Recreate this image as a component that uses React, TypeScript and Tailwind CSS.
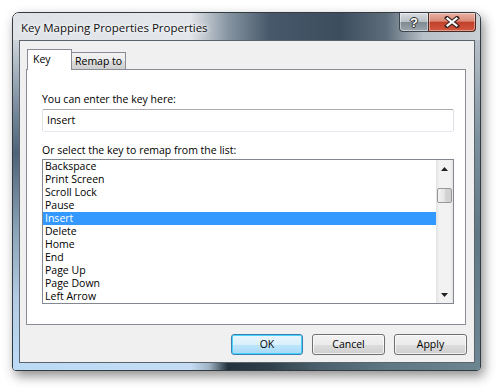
const keys = [
  "Backspace",
  "Print Screen",
  "Scroll Lock",
  "Pause",
  "Insert",
  "Delete",
  "Home",
  "End",
  "Page Up",
  "Page Down",
  "Left Arrow",
]

function TitleButtons() {
  return (
    <div className="ml-auto mr-[4px] flex h-[19px]">
      <div className="flex w-[29px] items-center justify-center rounded-bl-[4px] border border-t-0 border-r-0 border-[#3e464d] bg-[linear-gradient(180deg,#d9dde1_0%,#b9c0c6_48%,#7f8a93_52%,#9aa4ac_100%)] shadow-[inset_0_0_0_1px_rgba(255,255,255,0.45)]">
        <span className="font-['Liberation_Sans',sans-serif] text-[13px] font-bold leading-none text-white [text-shadow:0_0_1px_#222,1px_0_0_#333,-1px_0_0_#333,0_1px_0_#333,0_-1px_0_#333]">
          ?
        </span>
      </div>
      <div className="flex w-[48px] items-center justify-center rounded-br-[4px] border border-t-0 border-[#4b2a24] bg-[linear-gradient(180deg,#eab2a4_0%,#d98a77_45%,#c2402a_52%,#d2583f_100%)] shadow-[inset_0_0_0_1px_rgba(255,255,255,0.4)]">
        <svg width="16" height="12" viewBox="0 0 16 12">
          <path d="M3 2 L13 10 M13 2 L3 10" stroke="#3a2420" strokeWidth="4.2" strokeLinecap="square" />
          <path d="M3.5 2.5 L12.5 9.5 M12.5 2.5 L3.5 9.5" stroke="#ffffff" strokeWidth="2.2" strokeLinecap="square" />
        </svg>
      </div>
    </div>
  )
}

function ScrollBar() {
  return (
    <div className="flex w-[17px] flex-col bg-[linear-gradient(90deg,#e3e3e3,#f2f2f2_20%,#f2f2f2_80%,#e6e6e6)]">
      <div className="flex h-[17px] items-center justify-center">
        <svg width="7" height="4" viewBox="0 0 7 4">
          <path d="M0 4 L3.5 0 L7 4 Z" fill="#222" />
        </svg>
      </div>
      <div className="mx-[1px] mt-[11px] h-[15px] rounded-[2px] border border-[#979797] bg-[linear-gradient(90deg,#f3f3f3,#e4e4e4_50%,#d4d4d4_52%,#cfcfcf)]" />
      <div className="flex-1" />
      <div className="flex h-[17px] items-center justify-center">
        <svg width="7" height="4" viewBox="0 0 7 4">
          <path d="M0 0 L7 0 L3.5 4 Z" fill="#222" />
        </svg>
      </div>
    </div>
  )
}

function DlgButton({ label, primary }: { label: string; primary?: boolean }) {
  return (
    <div
      className={
        primary
          ? "flex h-[21px] w-[72px] items-center justify-center rounded-[3px] border border-[#3c7fb1] bg-[linear-gradient(180deg,#eaf6fd_0%,#d9f0fc_50%,#bee6fd_51%,#a7d9f5_100%)] shadow-[inset_0_0_0_1px_#48d3fb]"
          : "flex h-[21px] w-[73px] items-center justify-center rounded-[3px] border border-[#707070] bg-[linear-gradient(180deg,#f2f2f2_0%,#ebebeb_50%,#dddddd_51%,#cfcfcf_100%)] shadow-[inset_0_0_0_1px_rgba(255,255,255,0.7)]"
      }
    >
      {label}
    </div>
  )
}

export default function App() {
  return (
    <div className="h-[391px] w-[502px] whitespace-nowrap bg-white pl-[12px] pt-[12px] font-['Open_Sans','Noto_Sans',sans-serif] text-[10.5px] text-black">
      <div className="flex h-[359px] w-[469px] flex-col overflow-hidden rounded-t-[7px] rounded-b-[4px] border border-[#333b42] shadow-[3px_5px_12px_rgba(0,0,0,0.45)]">
        {/* title bar, aero glass */}
        <div className="flex h-[27px] items-start bg-[linear-gradient(90deg,#dfe3e7_0%,#e3e6ea_38%,#8795a2_46%,#465869_55%,#3c4d5e_70%,#5d6d7b_80%,#b9c1c8_88%,#c9d0d6_100%)]">
          <span className="ml-[8px] mt-[7px] text-[11.5px] leading-[15px] text-[#101010] [text-shadow:0_0_6px_#fff,0_0_3px_#fff]">
            Key Mapping Properties Properties
          </span>
          <TitleButtons />
        </div>

        <div className="flex flex-1">
          <div className="w-[6px] bg-[linear-gradient(180deg,#cfd5db_0%,#7d8fa0_20%,#4f6377_35%,#8ea5ba_60%,#b3cce3_80%,#bcdaf5_100%)]" />

          {/* client area */}
          <div className="flex flex-1 flex-col border border-[#5b646c] bg-[#f0f0f0] pl-[6px] pr-[8px] pt-[8px]">
            {/* tabs */}
            <div className="relative z-10 flex h-[20px] items-end pl-[1px]">
              <div className="-mb-[1px] h-[21px] w-[45px] border border-b-0 border-[#898c95] bg-white pl-[5px] pt-[2px] leading-[15px]">
                Key
              </div>
              <div className="h-[17px] w-[54px] border border-b-0 border-l-0 border-[#898c95] bg-[linear-gradient(180deg,#f2f2f2_0%,#ebebeb_50%,#dddddd_51%,#cfcfcf_100%)] pl-[3px] pt-[1px] leading-[15px]">
                Remap to
              </div>
            </div>

            {/* tab panel */}
            <div className="flex h-[256px] flex-col border border-[#898c95] bg-white pl-[15px] pr-[11px] pt-[22px]">
              <div className="h-[15px] leading-[15px]">You can enter the key here:</div>
              <div className="mt-[2px] flex h-[23px] items-center rounded-[2px] border border-[#e3e9ef] border-t-[#abadb3] border-l-[#e2e3ea] border-r-[#dbdfe6] pl-[4px]">
                Insert
              </div>
              <div className="mt-[11px] h-[15px] leading-[15px]">Or select the key to remap from the list:</div>
              <div className="mt-[1px] flex h-[145px] border border-[#828790]">
                <div className="flex flex-1 flex-col">
                  {keys.map((k) => (
                    <div
                      key={k}
                      className={
                        k === "Insert"
                          ? "h-[13px] bg-[#3399ff] pl-[2px] leading-[13px] text-white"
                          : "h-[13px] pl-[2px] leading-[13px]"
                      }
                    >
                      {k}
                    </div>
                  ))}
                </div>
                <ScrollBar />
              </div>
            </div>

            {/* buttons */}
            <div className="-mr-[1px] mt-[9px] flex justify-end gap-[9px]">
              <DlgButton label="OK" primary />
              <DlgButton label="Cancel" />
              <DlgButton label="Apply" />
            </div>
          </div>

          <div className="w-[5px] bg-[linear-gradient(180deg,#b8c1c9_0%,#7d919e_30%,#5f7884_60%,#6c8793_100%)]" />
        </div>

        <div className="h-[7px] bg-[linear-gradient(90deg,#bcdaf5_0%,#c4ddf4_38%,#9fb3c4_42%,#24323d_46%,#2f404c_55%,#4a5f6b_65%,#5e7783_80%,#6b8591_100%)]" />
      </div>
    </div>
  )
}
